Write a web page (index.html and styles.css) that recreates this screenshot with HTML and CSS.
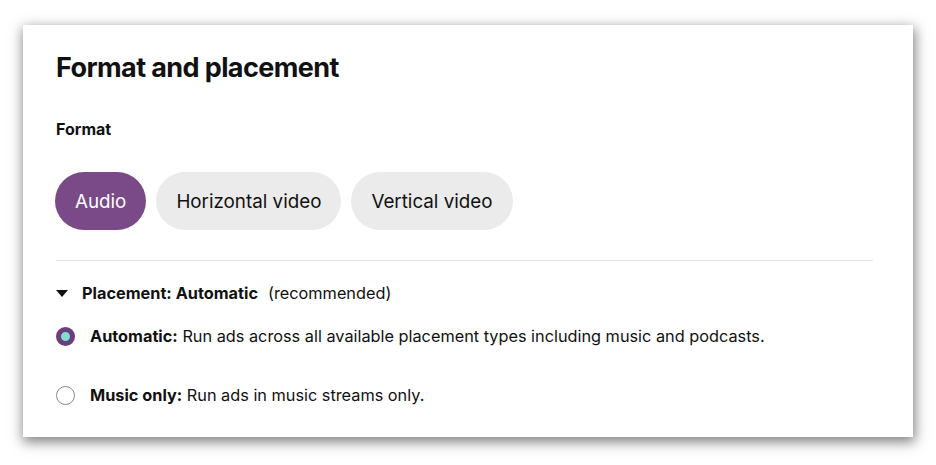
FILE: index.html
```html
<!DOCTYPE html>
<html>
<head>
<meta charset="utf-8">
<link rel="stylesheet" href="styles.css">
</head>
<body>
<section class="card">
  <h1 class="title">Format and placement</h1>
  <div class="label">Format</div>
  <div class="pills">
    <button class="pill pill-active">Audio</button>
    <button class="pill">Horizontal video</button>
    <button class="pill">Vertical video</button>
  </div>
  <hr class="divider">
  <div class="placement-head">
    <span class="caret"></span>
    <span class="ph-bold">Placement: Automatic</span>
    <span class="ph-note">(recommended)</span>
  </div>
  <div class="option">
    <span class="radio radio-on"></span>
    <span class="opt-text"><b>Automatic:</b> Run ads across all available placement types including music and podcasts.</span>
  </div>
  <div class="option option-2">
    <span class="radio"></span>
    <span class="opt-text"><b>Music only:</b> Run ads in music streams only.</span>
  </div>
</section>
</body>
</html>
```

FILE: styles.css
```css
* { box-sizing: border-box; }
html, body { margin: 0; padding: 0; background: #ffffff; }
body {
  font-family: "Inter", "Liberation Sans", sans-serif;
  color: #111111;
  padding: 25px 0 28px 23px;
  min-height: 465px;
}
.card {
  width: 890px;
  height: 412px;
  background: #ffffff;
  box-shadow: 1px 4px 12px 1px rgba(0,0,0,0.5);
  padding: 0 0 0 33px;
  display: flex;
  flex-direction: column;
}
.title {
  margin: 26px 0 0 0;
  font-size: 27px;
  font-weight: 700;
  letter-spacing: -0.6px;
  line-height: 34px;
}
.label {
  margin-top: 34px;
  font-size: 16px;
  font-weight: 700;
  line-height: 20px;
}
.pills {
  display: flex;
  gap: 10px;
  margin-top: 33px;
  margin-left: -1px;
}
.pill {
  border: none;
  height: 58px;
  border-radius: 29px;
  padding: 0 20px;
  font-family: inherit;
  font-size: 18.8px;
  color: #111;
  background: #ebebeb;
}
.pill-active {
  background: #7a4a88;
  color: #ffffff;
}
.divider {
  border: none;
  border-top: 1px solid #e3e3e3;
  margin: 30px 0 0 0;
  width: 817px;
}
.placement-head {
  display: flex;
  align-items: center;
  margin-top: 22px;
  font-size: 16.3px;
  line-height: 20px;
}
.caret {
  width: 0; height: 0;
  border-left: 6px solid transparent;
  border-right: 6px solid transparent;
  border-top: 7px solid #111;
  margin-right: 14px;
}
.ph-bold { font-weight: 700; margin-right: 10px; }
.option {
  display: flex;
  align-items: center;
  margin-top: 23px;
  font-size: 16.3px;
  line-height: 20px;
}
.option-2 { margin-top: 39px; }
.radio {
  width: 19px;
  height: 19px;
  border-radius: 50%;
  border: 1px solid #888;
  margin-right: 15px;
  flex: none;
}
.radio-on {
  border: 5px solid #6b3f7d;
  background: #7fe0d0;
}
.opt-text b { font-weight: 700; }
```
